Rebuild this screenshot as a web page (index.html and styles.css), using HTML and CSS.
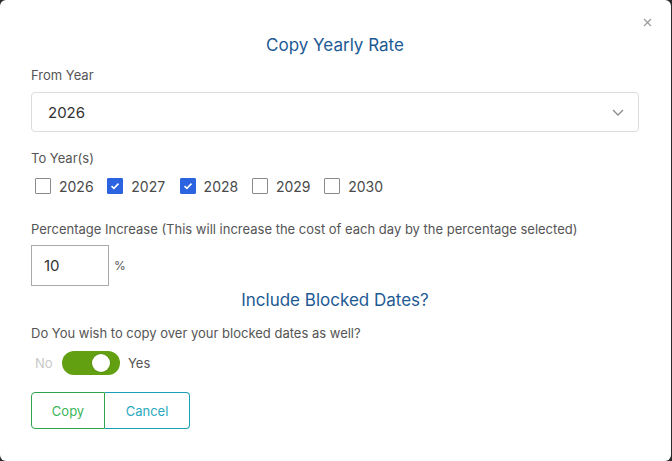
FILE: index.html
```html
<!DOCTYPE html>
<html lang="en">
<head>
<meta charset="utf-8">
<title>Copy Yearly Rate</title>
<link rel="stylesheet" href="styles.css">
</head>
<body>
<div class="modal">
  <button class="close" aria-label="Close">
    <svg width="9" height="9" viewBox="0 0 9 9"><path d="M1 1L8 8M8 1L1 8" stroke="#9a9a9a" stroke-width="1.2" fill="none"/></svg>
  </button>
  <h2 class="title">Copy Yearly Rate</h2>

  <div class="label from-label">From Year</div>
  <div class="select">
    <span class="select-value">2026</span>
    <svg class="chevron" width="12" height="7" viewBox="0 0 12 7"><path d="M1 1L6 6L11 1" stroke="#8a8a8a" stroke-width="1.3" fill="none"/></svg>
  </div>

  <div class="label to-label">To Year(s)</div>
  <div class="years">
    <label class="year"><span class="box"></span>2026</label>
    <label class="year"><span class="box checked"><svg width="10" height="8" viewBox="0 0 10 8"><path d="M1.5 4.2L3.9 6.4L8.5 1.6" stroke="#fff" stroke-width="1.6" fill="none"/></svg></span>2027</label>
    <label class="year"><span class="box checked"><svg width="10" height="8" viewBox="0 0 10 8"><path d="M1.5 4.2L3.9 6.4L8.5 1.6" stroke="#fff" stroke-width="1.6" fill="none"/></svg></span>2028</label>
    <label class="year"><span class="box"></span>2029</label>
    <label class="year"><span class="box"></span>2030</label>
  </div>

  <div class="label pct-label">Percentage Increase (This will increase the cost of each day by the percentage selected)</div>
  <div class="pct-row">
    <div class="pct-input">10</div>
    <span class="pct-sign">%</span>
  </div>

  <h3 class="subtitle">Include Blocked Dates?</h3>
  <div class="label question">Do You wish to copy over your blocked dates as well?</div>
  <div class="toggle-row">
    <span class="no">No</span>
    <span class="toggle"><span class="knob"></span></span>
    <span class="yes">Yes</span>
  </div>

  <div class="buttons">
    <button class="btn copy">Copy</button>
    <button class="btn cancel">Cancel</button>
  </div>
</div>
</body>
</html>
```

FILE: styles.css
```css
* { box-sizing: border-box; }
html, body { margin: 0; padding: 0; }
body {
  background: #2a2a2a;
  font-family: Inter, "Noto Sans", "Liberation Sans", sans-serif;
  width: 672px;
  height: 461px;
  overflow: hidden;
}
.modal {
  position: relative;
  width: 671px;
  height: 461px;
  background: #fff;
  border-radius: 6px;
  padding: 35px 32px 0 31px;
}
.close {
  position: absolute;
  top: 18px;
  right: 19px;
  border: 0;
  background: none;
  padding: 0;
  width: 9px;
  height: 9px;
  display: flex;
}
.title, .subtitle {
  margin: 0;
  text-align: center;
  font-size: 17px;
  line-height: 20px;
  font-weight: 400;
  color: #1d5a94;
}
.label {
  font-size: 13px;
  line-height: 18px;
  color: #555;
}
.from-label { margin-top: 11px; }
.select {
  margin-top: 8px;
  height: 40px;
  border: 1px solid #dcdcdc;
  border-radius: 4px;
  display: flex;
  align-items: center;
  justify-content: space-between;
  padding: 0 14px 0 16px;
}
.select-value { font-size: 15px; color: #333; }
.to-label { margin-top: 17px; }
.years {
  margin-top: 10px;
  display: flex;
  padding-left: 4px;
  height: 18px;
  align-items: center;
}
.year {
  display: flex;
  align-items: center;
  gap: 8px;
  width: 72.3px;
  font-size: 14px;
  color: #4a4a4a;
}
.box {
  width: 16px;
  height: 16px;
  border: 1px solid #8a8a8a;
  border-radius: 1px;
  display: flex;
  align-items: center;
  justify-content: center;
  flex-shrink: 0;
}
.box.checked {
  background: #2b63e0;
  border-color: #2b63e0;
}
.pct-label { margin-top: 25px; }
.pct-row {
  margin-top: 7px;
  display: flex;
  align-items: center;
  gap: 5px;
}
.pct-input {
  width: 78px;
  height: 41px;
  border: 1px solid #aaa;
  display: flex;
  align-items: center;
  padding-left: 12px;
  font-size: 15px;
  color: #333;
}
.pct-sign { font-size: 12px; color: #555; }
.subtitle { margin-top: 4px; }
.question { margin-top: 14px; }
.toggle-row {
  margin-top: 9px;
  display: flex;
  align-items: center;
  height: 24px;
  padding-left: 4px;
  font-size: 13px;
}
.no { color: #c8c8c8; width: 27px; }
.yes { color: #555; margin-left: 8px; }
.toggle {
  width: 58px;
  height: 24px;
  border-radius: 12px;
  background: #62a012;
  position: relative;
}
.knob {
  position: absolute;
  right: 10px;
  top: 3px;
  width: 18px;
  height: 18px;
  border-radius: 50%;
  background: #fff;
  box-shadow: 0 0 0 1px rgba(0,0,0,0.08);
}
.buttons {
  margin-top: 17px;
  display: flex;
}
.btn {
  height: 37px;
  background: #fff;
  font-family: inherit;
  font-size: 13px;
  padding: 0;
}
.copy {
  width: 74px;
  border: 1px solid #2ea54a;
  color: #3cb55a;
  border-radius: 4px 0 0 4px;
}
.cancel {
  width: 85px;
  border: 1px solid #1a9fb5;
  border-left: 0;
  color: #2aa9c0;
  border-radius: 0 4px 4px 0;
}
```
